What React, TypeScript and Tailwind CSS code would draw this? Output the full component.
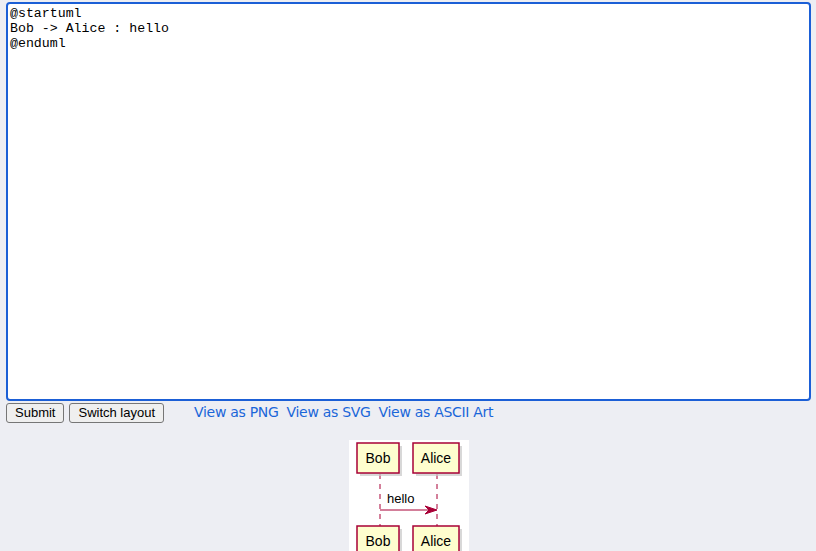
const umlSource = `@startuml
Bob -> Alice : hello
@enduml`;

const Participant = ({ x, y, w, label }: { x: number; y: number; w: number; label: string }) => (
  <g>
    <rect x={x + 3} y={y + 3} width={w} height={30} fill="#c8c8c8" opacity={0.7} />
    <rect x={x} y={y} width={w} height={30} fill="#FEFECE" stroke="#A80036" strokeWidth={1.5} />
    <text x={x + w / 2} y={y + 20} textAnchor="middle" fontSize={14} fontFamily="Liberation Sans, Arial, sans-serif" fill="#000">
      {label}
    </text>
  </g>
);

const Diagram = () => (
  <svg width={120} height={111} viewBox="0 0 120 111" className="bg-white block">
    <line x1={31} y1={34} x2={31} y2={86} stroke="#A80036" strokeDasharray="5 5" />
    <line x1={88} y1={34} x2={88} y2={86} stroke="#A80036" strokeDasharray="5 5" />
    <Participant x={8} y={3} w={42} label="Bob" />
    <Participant x={64} y={3} w={46} label="Alice" />
    <text x={38} y={63} fontSize={13} fontFamily="Liberation Sans, Arial, sans-serif" fill="#000">
      hello
    </text>
    <line x1={31} y1={70} x2={86} y2={70} stroke="#A80036" />
    <polygon points="76,66 88,70 76,74 80,70" fill="#A80036" stroke="#A80036" />
    <Participant x={8} y={86} w={42} label="Bob" />
    <Participant x={64} y={86} w={46} label="Alice" />
  </svg>
);

const App = () => {
  return (
    <div className="min-h-[551px] bg-[#edeef3] pt-[2px] px-[6px] font-['Liberation_Sans',Arial,sans-serif]">
      <textarea
        defaultValue={umlSource}
        spellCheck={false}
        className="block w-[805px] h-[399px] resize-none bg-white border-2 border-[#1b5fd6] rounded-[4px] px-[2px] py-[2px] text-[13.25px] leading-[15px] text-black font-['Liberation_Mono','Courier_New',monospace] outline-none"
      />
      <div className="flex items-center h-[21px] mt-[1px]">
        <button className="h-[20px] px-[8px] text-[13px] bg-[#efefef] border border-[#767676] rounded-[3px] text-black leading-none">
          Submit
        </button>
        <button className="ml-[5px] h-[20px] px-[8px] text-[13px] bg-[#efefef] border border-[#767676] rounded-[3px] text-black leading-none">
          Switch layout
        </button>
        <div className="ml-[30px] flex gap-[8px] text-[14px] text-[#1a66d9] font-['DejaVu_Sans',sans-serif] tracking-[-0.3px]">
          <a href="#">View as PNG</a>
          <a href="#">View as SVG</a>
          <a href="#">View as ASCII Art</a>
        </div>
      </div>
      <div className="flex justify-center pl-[2px] mt-[17px]">
        <Diagram />
      </div>
    </div>
  );
};

export default App;
